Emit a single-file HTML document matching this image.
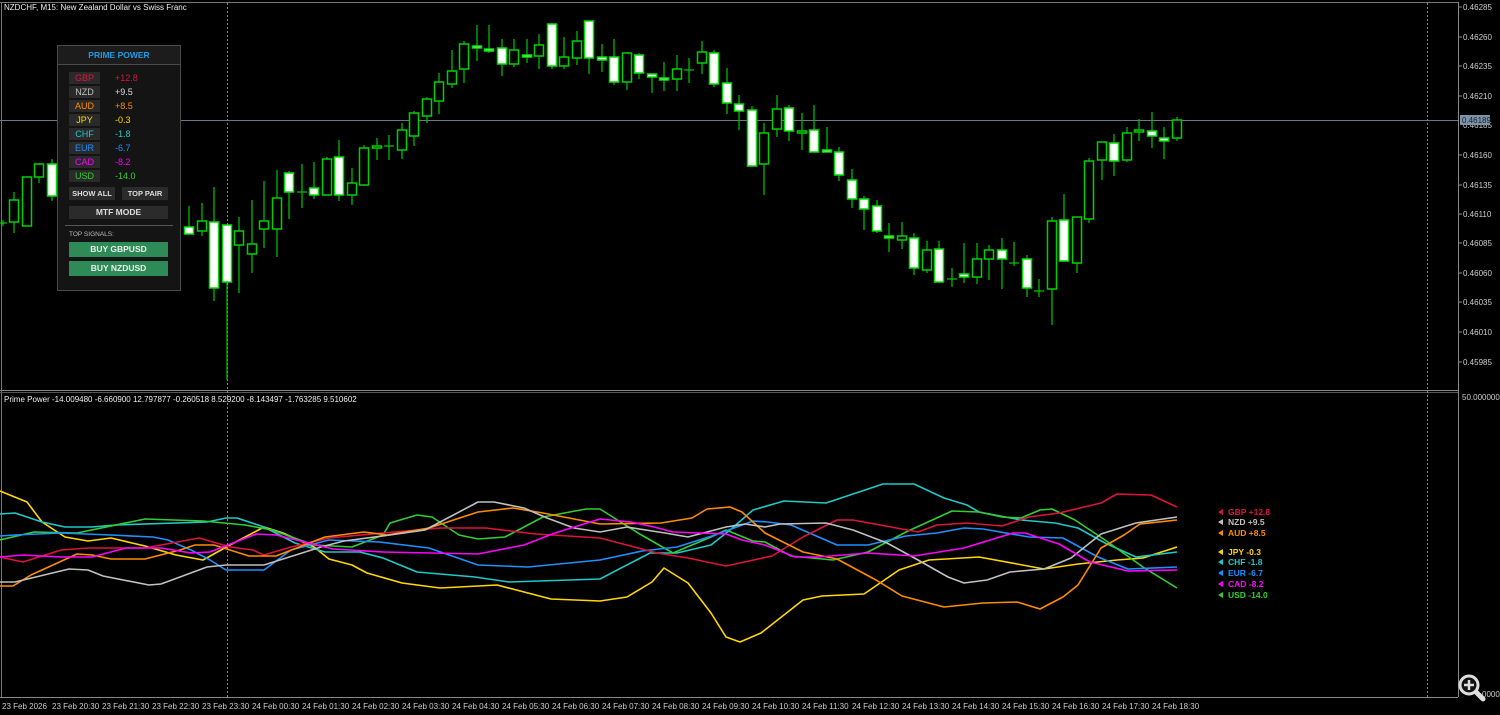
<!DOCTYPE html>
<html><head><meta charset="utf-8"><style>
html,body{margin:0;padding:0;background:#000;width:1500px;height:715px;overflow:hidden;font-family:"Liberation Sans",sans-serif}
svg{position:absolute;left:0;top:0}
.w{fill:#fff;stroke:#00e000;stroke-width:1.5}
.h{fill:#000;stroke:#00d000;stroke-width:1.5}
.k{stroke:#00c800;stroke-width:1.2}
.ax{font-family:"Liberation Sans",sans-serif;font-size:8px;fill:#ccc}
#panel{position:absolute;left:57px;top:45px;width:122px;height:244px;background:#141414;border:1px solid #4a4a4a;font-family:"Liberation Sans",sans-serif}
#panel .t{height:18px;border-bottom:1px solid #4a4a4a;background:#1c1c1c;color:#1e9be0;font-size:8.5px;font-weight:bold;text-align:center;line-height:19px}
.row{position:absolute;left:11px;width:110px;height:12px;font-size:9px}
.row .c{position:absolute;left:0;width:31px;height:12px;background:#2a2a2a;text-align:center;line-height:12px}
.row .v{position:absolute;left:46px;line-height:13px}
.btn{position:absolute;background:#2b2b2b;color:#ddd;font-size:7.5px;text-align:center;font-weight:bold}
.buy{position:absolute;left:11px;width:99px;height:15px;background:#2e8b57;color:#eee;font-size:8.5px;font-weight:bold;text-align:center;line-height:15px}
</style></head><body>
<svg width="1500" height="715" viewBox="0 0 1500 715">
<!-- frames -->
<line x1="0" y1="2.5" x2="1458" y2="2.5" stroke="#777" stroke-width="1"/>
<line x1="1.5" y1="2" x2="1.5" y2="697" stroke="#777"/>
<line x1="1458.5" y1="2" x2="1458.5" y2="697" stroke="#888"/>
<line x1="0" y1="390.5" x2="1458" y2="390.5" stroke="#888"/>
<line x1="0" y1="392.5" x2="1458" y2="392.5" stroke="#555"/>
<line x1="0" y1="697.5" x2="1458" y2="697.5" stroke="#888"/>
<line x1="227.5" y1="3" x2="227.5" y2="697" stroke="#888" stroke-dasharray="2,2"/>
<line x1="1427.5" y1="3" x2="1427.5" y2="697" stroke="#888" stroke-dasharray="2,2"/>
<line x1="0" y1="120.5" x2="1458" y2="120.5" stroke="#6a7888" stroke-width="1"/>
<!-- price axis -->
<g class="ax">
<g stroke="#888"><line x1="1458" y1="7" x2="1462" y2="7"/><line x1="1458" y1="37" x2="1462" y2="37"/><line x1="1458" y1="66" x2="1462" y2="66"/><line x1="1458" y1="96" x2="1462" y2="96"/><line x1="1458" y1="155" x2="1462" y2="155"/><line x1="1458" y1="185" x2="1462" y2="185"/><line x1="1458" y1="214" x2="1462" y2="214"/><line x1="1458" y1="243" x2="1462" y2="243"/><line x1="1458" y1="273" x2="1462" y2="273"/><line x1="1458" y1="302" x2="1462" y2="302"/><line x1="1458" y1="332" x2="1462" y2="332"/><line x1="1458" y1="362" x2="1462" y2="362"/></g>
<text x="1463" y="10">0.46285</text><text x="1463" y="40">0.46260</text><text x="1463" y="69">0.46235</text><text x="1463" y="99">0.46210</text><text x="1463" y="128">0.46185</text><text x="1463" y="158">0.46160</text><text x="1463" y="188">0.46135</text><text x="1463" y="217">0.46110</text><text x="1463" y="246">0.46085</text><text x="1463" y="276">0.46060</text><text x="1463" y="305">0.46035</text><text x="1463" y="335">0.46010</text><text x="1463" y="365">0.45985</text>
<rect x="1460" y="115" width="30" height="10" fill="#7f92a8"/><text x="1462" y="123" fill="#1a2a3a" style="fill:#102030">0.46189</text>
<text x="1462" y="400">50.000000</text>
<text x="1482" y="697">0000</text>
</g>
<!-- time axis -->
<g class="ax">
<text x="2" y="709">23 Feb 2026</text><text x="52" y="709">23 Feb 20:30</text><text x="102" y="709">23 Feb 21:30</text><text x="152" y="709">23 Feb 22:30</text><text x="202" y="709">23 Feb 23:30</text><text x="252" y="709">24 Feb 00:30</text><text x="302" y="709">24 Feb 01:30</text><text x="352" y="709">24 Feb 02:30</text><text x="402" y="709">24 Feb 03:30</text><text x="452" y="709">24 Feb 04:30</text><text x="502" y="709">24 Feb 05:30</text><text x="552" y="709">24 Feb 06:30</text><text x="602" y="709">24 Feb 07:30</text><text x="652" y="709">24 Feb 08:30</text><text x="702" y="709">24 Feb 09:30</text><text x="752" y="709">24 Feb 10:30</text><text x="802" y="709">24 Feb 11:30</text><text x="852" y="709">24 Feb 12:30</text><text x="902" y="709">24 Feb 13:30</text><text x="952" y="709">24 Feb 14:30</text><text x="1002" y="709">24 Feb 15:30</text><text x="1052" y="709">24 Feb 16:30</text><text x="1102" y="709">24 Feb 17:30</text><text x="1152" y="709">24 Feb 18:30</text>
</g>
<text x="4" y="10" class="ax" style="fill:#eee">NZDCHF, M15:  New Zealand Dollar vs Swiss Franc</text>
<text x="4" y="402" class="ax" style="fill:#eee">Prime Power -14.009480 -6.660900 12.797877 -0.260518 8.529200 -8.143497 -1.763285 9.510602</text>
<!-- candles -->
<g>
<line class="k" x1="3" y1="220" x2="3" y2="226"/><line class="k" x1="-1" y1="223" x2="7" y2="223"/>
<line class="k" x1="14" y1="192" x2="14" y2="233"/><rect class="h" x="9.5" y="200" width="9" height="22"/>
<line class="k" x1="27" y1="177" x2="27" y2="226"/><rect class="h" x="22.5" y="177" width="9" height="49"/>
<line class="k" x1="39" y1="163" x2="39" y2="183"/><rect class="h" x="34.5" y="164" width="9" height="13"/>
<line class="k" x1="52" y1="159" x2="52" y2="201"/><rect class="w" x="47.5" y="164" width="9" height="32"/>
<line class="k" x1="189" y1="206" x2="189" y2="235"/><rect class="w" x="184.5" y="227" width="9" height="7"/>
<line class="k" x1="202" y1="203" x2="202" y2="236"/><rect class="h" x="197.5" y="221" width="9" height="10"/>
<line class="k" x1="214" y1="187" x2="214" y2="301"/><rect class="w" x="209.5" y="222" width="9" height="66"/>
<line class="k" x1="227" y1="225" x2="227" y2="380"/><rect class="w" x="222.5" y="225" width="9" height="57"/>
<line class="k" x1="239" y1="217" x2="239" y2="293"/><rect class="h" x="234.5" y="231" width="9" height="14"/>
<line class="k" x1="252" y1="200" x2="252" y2="273"/><rect class="h" x="247.5" y="244" width="9" height="10"/>
<line class="k" x1="264" y1="181" x2="264" y2="248"/><rect class="h" x="259.5" y="221" width="9" height="8"/>
<line class="k" x1="277" y1="170" x2="277" y2="257"/><rect class="h" x="272.5" y="198" width="9" height="31"/>
<line class="k" x1="289" y1="171" x2="289" y2="219"/><rect class="w" x="284.5" y="173" width="9" height="19"/>
<line class="k" x1="302" y1="164" x2="302" y2="208"/><line class="k" x1="297" y1="192" x2="307" y2="192"/>
<line class="k" x1="314" y1="162" x2="314" y2="199"/><rect class="w" x="309.5" y="188" width="9" height="7"/>
<line class="k" x1="327" y1="157" x2="327" y2="195"/><rect class="h" x="322.5" y="159" width="9" height="36"/>
<line class="k" x1="339" y1="140" x2="339" y2="201"/><rect class="w" x="334.5" y="157" width="9" height="38"/>
<line class="k" x1="352" y1="168" x2="352" y2="205"/><rect class="h" x="347.5" y="183" width="9" height="12"/>
<line class="k" x1="364" y1="145" x2="364" y2="186"/><rect class="h" x="359.5" y="148" width="9" height="37"/>
<line class="k" x1="377" y1="138" x2="377" y2="160"/><rect class="h" x="372.5" y="146" width="9" height="2"/>
<line class="k" x1="389" y1="135" x2="389" y2="160"/><line class="k" x1="384" y1="146" x2="394" y2="146"/>
<line class="k" x1="402" y1="123" x2="402" y2="159"/><rect class="h" x="397.5" y="130" width="9" height="20"/>
<line class="k" x1="414" y1="111" x2="414" y2="146"/><rect class="h" x="409.5" y="113" width="9" height="23"/>
<line class="k" x1="427" y1="97" x2="427" y2="123"/><rect class="h" x="422.5" y="99" width="9" height="17"/>
<line class="k" x1="439" y1="73" x2="439" y2="114"/><rect class="h" x="434.5" y="82" width="9" height="19"/>
<line class="k" x1="452" y1="50" x2="452" y2="88"/><rect class="h" x="447.5" y="71" width="9" height="13"/>
<line class="k" x1="464" y1="41" x2="464" y2="83"/><rect class="h" x="459.5" y="44" width="9" height="25"/>
<line class="k" x1="477" y1="25" x2="477" y2="61"/><rect class="w" x="472.5" y="46" width="9" height="2"/>
<line class="k" x1="489" y1="25" x2="489" y2="53"/><rect class="w" x="484.5" y="49" width="9" height="2"/>
<line class="k" x1="502" y1="39" x2="502" y2="76"/><rect class="w" x="497.5" y="48" width="9" height="16"/>
<line class="k" x1="514" y1="39" x2="514" y2="67"/><rect class="h" x="509.5" y="50" width="9" height="14"/>
<line class="k" x1="527" y1="39" x2="527" y2="63"/><rect class="w" x="522.5" y="55" width="9" height="2"/>
<line class="k" x1="539" y1="34" x2="539" y2="69"/><rect class="h" x="534.5" y="45" width="9" height="11"/>
<line class="k" x1="552" y1="24" x2="552" y2="69"/><rect class="w" x="547.5" y="24" width="9" height="42"/>
<line class="k" x1="564" y1="37" x2="564" y2="69"/><rect class="h" x="559.5" y="57" width="9" height="9"/>
<line class="k" x1="577" y1="31" x2="577" y2="65"/><rect class="h" x="572.5" y="41" width="9" height="17"/>
<line class="k" x1="589" y1="21" x2="589" y2="74"/><rect class="w" x="584.5" y="21" width="9" height="37"/>
<line class="k" x1="602" y1="44" x2="602" y2="72"/><rect class="w" x="597.5" y="57" width="9" height="3"/>
<line class="k" x1="614" y1="39" x2="614" y2="85"/><rect class="w" x="609.5" y="57" width="9" height="25"/>
<line class="k" x1="627" y1="53" x2="627" y2="90"/><rect class="h" x="622.5" y="53" width="9" height="29"/>
<line class="k" x1="639" y1="53" x2="639" y2="79"/><rect class="w" x="634.5" y="55" width="9" height="18"/>
<line class="k" x1="652" y1="74" x2="652" y2="93"/><rect class="w" x="647.5" y="74" width="9" height="3"/>
<line class="k" x1="664" y1="62" x2="664" y2="91"/><rect class="w" x="659.5" y="78" width="9" height="2"/>
<line class="k" x1="677" y1="55" x2="677" y2="91"/><rect class="h" x="672.5" y="69" width="9" height="10"/>
<line class="k" x1="689" y1="58" x2="689" y2="83"/><line class="k" x1="684" y1="70" x2="694" y2="70"/>
<line class="k" x1="702" y1="41" x2="702" y2="74"/><rect class="h" x="697.5" y="52" width="9" height="11"/>
<line class="k" x1="714" y1="50" x2="714" y2="87"/><rect class="w" x="709.5" y="53" width="9" height="31"/>
<line class="k" x1="727" y1="68" x2="727" y2="114"/><rect class="w" x="722.5" y="83" width="9" height="20"/>
<line class="k" x1="739" y1="95" x2="739" y2="130"/><rect class="w" x="734.5" y="104" width="9" height="7"/>
<line class="k" x1="752" y1="106" x2="752" y2="166"/><rect class="w" x="747.5" y="110" width="9" height="56"/>
<line class="k" x1="764" y1="123" x2="764" y2="195"/><rect class="h" x="759.5" y="133" width="9" height="31"/>
<line class="k" x1="777" y1="95" x2="777" y2="137"/><rect class="h" x="772.5" y="109" width="9" height="20"/>
<line class="k" x1="789" y1="105" x2="789" y2="141"/><rect class="w" x="784.5" y="108" width="9" height="23"/>
<line class="k" x1="802" y1="113" x2="802" y2="150"/><rect class="h" x="797.5" y="131" width="9" height="2"/>
<line class="k" x1="814" y1="105" x2="814" y2="152"/><rect class="w" x="809.5" y="130" width="9" height="22"/>
<line class="k" x1="827" y1="127" x2="827" y2="152"/><rect class="w" x="822.5" y="150" width="9" height="2"/>
<line class="k" x1="839" y1="147" x2="839" y2="181"/><rect class="w" x="834.5" y="152" width="9" height="23"/>
<line class="k" x1="852" y1="169" x2="852" y2="208"/><rect class="w" x="847.5" y="180" width="9" height="19"/>
<line class="k" x1="864" y1="196" x2="864" y2="230"/><rect class="w" x="859.5" y="199" width="9" height="10"/>
<line class="k" x1="877" y1="200" x2="877" y2="233"/><rect class="w" x="872.5" y="206" width="9" height="25"/>
<line class="k" x1="889" y1="223" x2="889" y2="252"/><rect class="w" x="884.5" y="236" width="9" height="2"/>
<line class="k" x1="902" y1="222" x2="902" y2="249"/><rect class="h" x="897.5" y="236" width="9" height="4"/>
<line class="k" x1="914" y1="233" x2="914" y2="275"/><rect class="w" x="909.5" y="238" width="9" height="30"/>
<line class="k" x1="927" y1="241" x2="927" y2="273"/><rect class="h" x="922.5" y="250" width="9" height="20"/>
<line class="k" x1="939" y1="241" x2="939" y2="282"/><rect class="w" x="934.5" y="249" width="9" height="33"/>
<line class="k" x1="952" y1="268" x2="952" y2="287"/><line class="k" x1="947" y1="279" x2="957" y2="279"/>
<line class="k" x1="964" y1="243" x2="964" y2="283"/><rect class="w" x="959.5" y="274" width="9" height="3"/>
<line class="k" x1="977" y1="243" x2="977" y2="284"/><rect class="h" x="972.5" y="259" width="9" height="18"/>
<line class="k" x1="989" y1="245" x2="989" y2="280"/><rect class="h" x="984.5" y="250" width="9" height="9"/>
<line class="k" x1="1002" y1="238" x2="1002" y2="289"/><rect class="w" x="997.5" y="250" width="9" height="9"/>
<line class="k" x1="1014" y1="242" x2="1014" y2="266"/><line class="k" x1="1009" y1="263" x2="1019" y2="263"/>
<line class="k" x1="1027" y1="255" x2="1027" y2="297"/><rect class="w" x="1022.5" y="259" width="9" height="29"/>
<line class="k" x1="1039" y1="279" x2="1039" y2="297"/><line class="k" x1="1034" y1="291" x2="1044" y2="291"/>
<line class="k" x1="1052" y1="217" x2="1052" y2="325"/><rect class="h" x="1047.5" y="221" width="9" height="68"/>
<line class="k" x1="1064" y1="194" x2="1064" y2="261"/><rect class="w" x="1059.5" y="220" width="9" height="41"/>
<line class="k" x1="1077" y1="217" x2="1077" y2="273"/><rect class="h" x="1072.5" y="217" width="9" height="46"/>
<line class="k" x1="1089" y1="158" x2="1089" y2="223"/><rect class="h" x="1084.5" y="161" width="9" height="58"/>
<line class="k" x1="1102" y1="142" x2="1102" y2="180"/><rect class="h" x="1097.5" y="142" width="9" height="18"/>
<line class="k" x1="1114" y1="134" x2="1114" y2="176"/><rect class="w" x="1109.5" y="143" width="9" height="18"/>
<line class="k" x1="1127" y1="127" x2="1127" y2="162"/><rect class="h" x="1122.5" y="133" width="9" height="27"/>
<line class="k" x1="1139" y1="119" x2="1139" y2="141"/><rect class="h" x="1134.5" y="130" width="9" height="2"/>
<line class="k" x1="1152" y1="112" x2="1152" y2="148"/><rect class="w" x="1147.5" y="131" width="9" height="5"/>
<line class="k" x1="1164" y1="127" x2="1164" y2="159"/><rect class="w" x="1159.5" y="138" width="9" height="3"/>
<line class="k" x1="1177" y1="117" x2="1177" y2="141"/><rect class="h" x="1172.5" y="120" width="9" height="18"/>
</g>
<!-- indicator lines -->
<g fill="none" stroke-width="1.6" stroke-linejoin="round">
<polyline stroke="#ffd700" points="0,491 27,502 42,522 65,537 88,541 111,538 145,546 176,555 203,560 230,545 264,527 283,533 314,547 329,559 352,565 367,573 402,583 440,588 497,585 551,599 600,601 627,597 652,582 664,568 688,583 711,613 726,637 740,642 761,633 803,600 822,596 864,594 899,570 929,560 979,557 1017,564 1044,569 1078,564 1117,560 1143,558 1177,547"/>
<polyline stroke="#20c8c8" points="0,514 15,513 42,522 65,527 92,527 115,525 207,522 226,518 237,518 264,527 295,543 325,552 360,552 383,558 417,572 475,577 509,582 600,579 650,553 677,553 711,545 730,530 753,510 784,501 826,503 883,484 914,484 944,498 967,505 979,512 1021,520 1055,523 1078,528 1105,543 1136,557 1177,552"/>
<polyline stroke="#32cd32" points="0,540 34,532 77,533 145,519 203,521 245,525 272,530 314,545 352,547 383,535 390,523 417,515 432,517 459,535 478,539 505,537 543,517 586,509 600,509 638,533 673,553 711,537 726,530 753,541 765,542 791,556 833,560 868,552 906,532 952,511 979,512 1002,517 1021,518 1040,510 1052,509 1075,520 1105,540 1143,567 1177,588"/>
<polyline stroke="#1e90ff" points="0,536 15,535 61,533 111,535 153,537 168,540 191,550 210,560 226,570 264,570 291,550 329,540 379,542 429,548 478,565 528,567 600,560 642,551 677,547 715,535 753,521 768,522 791,525 837,545 868,545 906,536 937,533 964,528 983,529 1029,537 1063,538 1098,557 1128,569 1177,567"/>
<polyline stroke="#dc143c" points="0,557 23,562 61,550 88,548 145,548 199,538 230,547 253,550 264,555 291,547 329,538 383,533 440,528 486,528 536,534 600,538 657,553 688,558 726,566 772,556 803,537 837,520 853,520 891,527 918,532 937,525 967,523 1002,526 1029,517 1059,513 1101,503 1117,494 1151,495 1177,507"/>
<polyline stroke="#ff8c00" points="0,586 13,586 31,575 77,554 92,555 111,559 145,559 180,550 195,545 214,545 249,556 276,556 325,537 364,532 387,535 429,528 478,512 513,508 543,513 600,524 661,523 692,518 707,509 730,507 742,512 765,533 803,552 837,559 876,580 902,596 944,607 983,603 1017,602 1040,609 1063,597 1078,585 1101,548 1124,535 1140,524 1177,520"/>
<polyline stroke="#c0c0c0" points="0,582 15,582 69,569 88,570 103,576 149,585 161,584 207,567 226,565 264,565 321,547 344,541 390,535 425,530 478,502 494,502 524,508 547,518 574,528 600,532 627,527 665,533 688,537 726,527 745,524 765,527 780,524 826,523 853,530 887,543 918,560 948,577 964,583 987,580 1010,572 1044,569 1071,558 1101,534 1136,523 1177,517"/>
<polyline stroke="#ff00ff" points="0,557 23,555 61,557 92,557 126,548 161,548 191,553 210,552 233,543 256,534 276,535 333,549 383,552 478,554 524,545 555,533 600,519 631,522 654,527 673,532 726,534 742,540 765,545 795,557 818,557 868,553 914,556 964,548 1013,533 1025,533 1059,544 1090,562 1128,571 1177,570"/>
</g>
<!-- legend -->
<g font-family="Liberation Sans, sans-serif" font-size="8.5" font-weight="bold">
<path d="M1218,512 l5,-3 v6z" fill="#dc143c"/><text x="1228" y="515" fill="#dc143c">GBP +12.8</text>
<path d="M1218,522 l5,-3 v6z" fill="#c0c0c0"/><text x="1228" y="525" fill="#c0c0c0">NZD +9.5</text>
<path d="M1218,533 l5,-3 v6z" fill="#ff8c00"/><text x="1228" y="536" fill="#ff8c00">AUD +8.5</text>
<path d="M1218,552 l5,-3 v6z" fill="#ffd700"/><text x="1228" y="555" fill="#ffd700">JPY -0.3</text>
<path d="M1218,562 l5,-3 v6z" fill="#20c8c8"/><text x="1228" y="565" fill="#20c8c8">CHF -1.8</text>
<path d="M1218,573 l5,-3 v6z" fill="#1e90ff"/><text x="1228" y="576" fill="#1e90ff">EUR -6.7</text>
<path d="M1218,584 l5,-3 v6z" fill="#ff00ff"/><text x="1228" y="587" fill="#ff00ff">CAD -8.2</text>
<path d="M1218,595 l5,-3 v6z" fill="#32cd32"/><text x="1228" y="598" fill="#32cd32">USD -14.0</text>
</g>
<!-- magnifier -->
<g>
<line x1="1475" y1="691" x2="1483" y2="699" stroke="#ddd" stroke-width="5" stroke-linecap="round"/>
<circle cx="1469" cy="685" r="9" fill="#111" stroke="#ddd" stroke-width="3"/>
<path d="M1469,680 v10 M1464,685 h10" stroke="#ddd" stroke-width="2.5"/>
</g>
</svg>
<div id="panel">
<div class="t">PRIME POWER</div>
<div class="row" style="top:26px"><span class="c" style="color:#dc143c">GBP</span><span class="v" style="color:#dc143c">+12.8</span></div>
<div class="row" style="top:40px"><span class="c" style="color:#c0c0c0">NZD</span><span class="v" style="color:#ddd">+9.5</span></div>
<div class="row" style="top:54px"><span class="c" style="color:#ff8c00">AUD</span><span class="v" style="color:#ff8c00">+8.5</span></div>
<div class="row" style="top:68px"><span class="c" style="color:#ffd700">JPY</span><span class="v" style="color:#ffd700">-0.3</span></div>
<div class="row" style="top:82px"><span class="c" style="color:#20c8c8">CHF</span><span class="v" style="color:#20c8c8">-1.8</span></div>
<div class="row" style="top:96px"><span class="c" style="color:#1e90ff">EUR</span><span class="v" style="color:#1e90ff">-6.7</span></div>
<div class="row" style="top:110px"><span class="c" style="color:#ff00ff">CAD</span><span class="v" style="color:#ff00ff">-8.2</span></div>
<div class="row" style="top:124px"><span class="c" style="color:#32cd32">USD</span><span class="v" style="color:#32cd32">-14.0</span></div>
<div class="btn" style="left:11px;top:141px;width:46px;height:13px;line-height:13px">SHOW ALL</div>
<div class="btn" style="left:64px;top:141px;width:46px;height:13px;line-height:13px">TOP PAIR</div>
<div class="btn" style="left:11px;top:160px;width:99px;height:13px;line-height:13px;font-size:8.5px">MTF MODE</div>
<div style="position:absolute;left:7px;top:179px;width:108px;height:1px;background:#555"></div>
<div style="position:absolute;left:11px;top:185px;font-size:6.5px;color:#bbb">TOP SIGNALS:</div>
<div class="buy" style="top:196px">BUY GBPUSD</div>
<div class="buy" style="top:215px">BUY NZDUSD</div>
</div>
</body></html>
